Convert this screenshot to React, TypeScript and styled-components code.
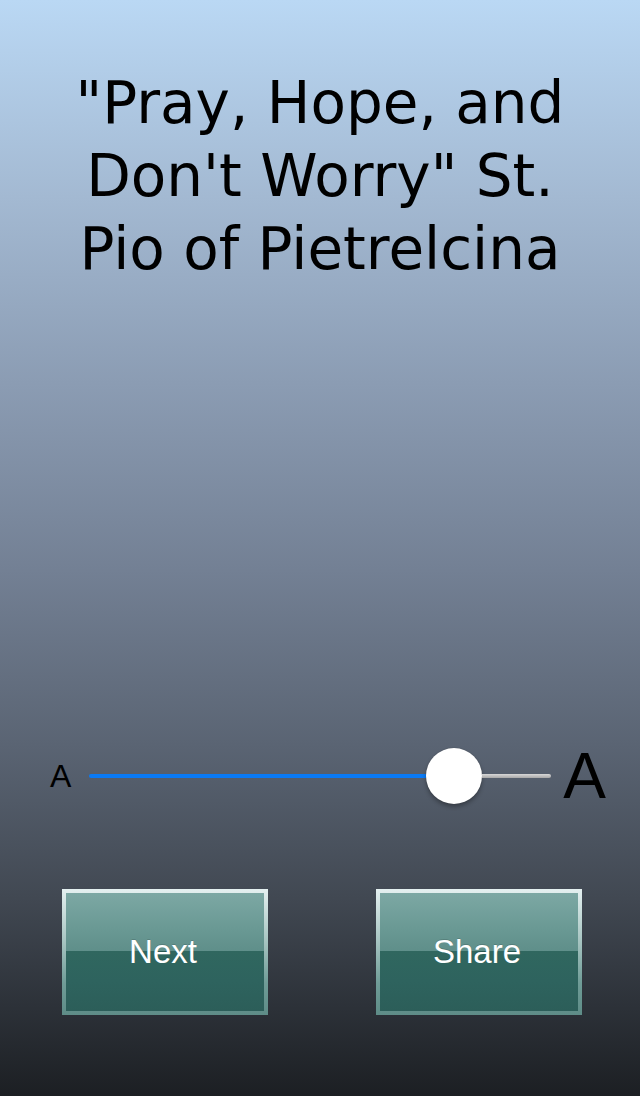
import React from "react";
import styled, { createGlobalStyle } from "styled-components";

const Global = createGlobalStyle`
  html, body { margin: 0; padding: 0; background: #1d2025; }
  * { box-sizing: border-box; }
`;

const Screen = styled.div`
  width: 640px;
  height: 1096px;
  overflow: hidden;
  display: flex;
  flex-direction: column;
  background: linear-gradient(
    to bottom,
    #bad8f4 0%,
    #a3b9d2 18%,
    #8b9cb3 35%,
    #738094 52%,
    #5a6473 68%,
    #414852 82%,
    #2c3138 92%,
    #1c1f23 100%
  );
`;

const Quote = styled.h1`
  margin: 67px 0 0;
  padding: 0 40px;
  font-family: "DejaVu Sans", Verdana, sans-serif;
  font-weight: normal;
  font-size: 58px;
  line-height: 73px;
  color: #000;
  text-align: center;
`;

const Spacer = styled.div`
  flex: 1;
`;

const SliderRow = styled.div`
  display: flex;
  align-items: center;
  height: 64px;
  padding-left: 50px;
`;

const SizeLabel = styled.span<{ $size: number }>`
  font-family: "Liberation Sans", Arial, sans-serif;
  font-size: ${(p) => p.$size}px;
  line-height: 1;
  color: #000;
`;

const Track = styled.div`
  display: flex;
  align-items: center;
  width: 462px;
  margin: 0 12px 0 18px;
`;

const Fill = styled.div`
  flex: 0 0 337px;
  height: 4px;
  border-radius: 2px 0 0 2px;
  background: #0a7af5;
`;

const Rest = styled.div`
  flex: 1;
  height: 4px;
  border-radius: 0 2px 2px 0;
  background: linear-gradient(to bottom, #d8d8d8, #a8a8a8);
`;

const Thumb = styled.div`
  flex: 0 0 56px;
  height: 56px;
  border-radius: 50%;
  background: #fff;
  box-shadow: 0 3px 4px rgba(0, 0, 0, 0.3), 0 0 1px rgba(0, 0, 0, 0.3);
`;

const Buttons = styled.div`
  display: flex;
  gap: 108px;
  padding-left: 62px;
  margin: 81px 0 81px;
`;

const Button = styled.button`
  width: 206px;
  height: 126px;
  padding: 4px;
  border: none;
  cursor: pointer;
  background: linear-gradient(to bottom, #e4f0f0 0%, #a9c6c3 40%, #6f9c97 75%, #5e8c87 100%);
`;

const ButtonFace = styled.span`
  display: flex;
  align-items: center;
  justify-content: center;
  width: 100%;
  height: 100%;
  padding-right: 4px;
  background: linear-gradient(
    to bottom,
    #7ca8a4 0%,
    #6a9994 30%,
    #5f8f8a 49%,
    #30675f 49%,
    #2e635e 75%,
    #2c5e59 100%
  );
  font-family: "Liberation Sans", Arial, sans-serif;
  font-size: 33px;
  color: #fff;
  text-shadow: 0 -1px 0 rgba(0, 0, 0, 0.15);
`;

export default function App() {
  return (
    <>
      <Global />
      <Screen>
        <Quote>
          "Pray, Hope, and Don't Worry" St. Pio of Pietrelcina
        </Quote>
        <Spacer />
        <SliderRow>
          <SizeLabel $size={32}>A</SizeLabel>
          <Track>
            <Fill />
            <Thumb />
            <Rest />
          </Track>
          <SizeLabel $size={64}>A</SizeLabel>
        </SliderRow>
        <Buttons>
          <Button>
            <ButtonFace>Next</ButtonFace>
          </Button>
          <Button>
            <ButtonFace>Share</ButtonFace>
          </Button>
        </Buttons>
      </Screen>
    </>
  );
}
